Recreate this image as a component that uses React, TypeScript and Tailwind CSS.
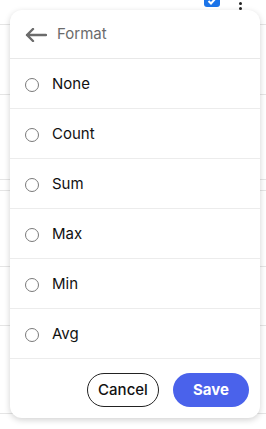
import React from "react";

const options = ["None", "Count", "Sum", "Max", "Min", "Avg"];

export default function App() {
  return (
    <div
      className="relative w-[266px] h-[429px] overflow-hidden bg-white"
      style={{ fontFamily: "Inter, 'Noto Sans', sans-serif" }}
    >
      {/* background page */}
      <div className="absolute inset-0">
        <div className="h-[25px] border-b border-[#e5e5e5]" />
        <div className="h-[70px] border-b border-[#e5e5e5]" />
        <div className="h-[85px] border-b border-[#e5e5e5]" />
        <div className="h-[11px] border-b border-[#e5e5e5]" />
        <div className="h-[76px] border-b border-[#e5e5e5]" />
        <div className="h-[59px] border-b border-[#e5e5e5]" />
        <div className="h-[88px] border-b border-[#e5e5e5]" />
        {/* checkbox + kebab */}
        <div className="absolute left-[204px] top-[-9px] w-[16px] h-[16px] rounded-[3px] bg-[#1a73e8] flex items-end justify-center pb-[2px]">
          <svg width="10" height="8" viewBox="0 0 10 8">
            <path d="M1.5 4l2.5 2.5L8.5 1.5" stroke="white" strokeWidth="2" fill="none" />
          </svg>
        </div>
        <div className="absolute left-[239px] top-[-3px] flex flex-col gap-[2px]">
          <div className="w-[3px] h-[3px] rounded-full bg-[#222]" />
          <div className="w-[3px] h-[3px] rounded-full bg-[#222]" />
          <div className="w-[3px] h-[3px] rounded-full bg-[#222]" />
        </div>
      </div>

      {/* popover */}
      <div className="absolute left-[10px] top-[10px] w-[250px] h-[408px] rounded-[12px] bg-white shadow-[0_2px_6px_rgba(0,0,0,0.18)] flex flex-col">
        <div className="h-[49px] flex items-center pl-[15px] pt-[1px] border-b border-[#e8e8e8]">
          <svg width="22" height="14" viewBox="0 0 22 14" className="mr-[10px]">
            <path d="M21 7H2M8 1L2 7l6 6" stroke="#6b6b6b" strokeWidth="2.4" fill="none" strokeLinecap="round" strokeLinejoin="round" />
          </svg>
          <span className="text-[15px] text-[#6b6b6b]">Format</span>
        </div>
        {options.map((o) => (
          <div key={o} className="h-[50px] flex items-center pl-[15px] pt-[2px] border-b border-[#ececec] shrink-0">
            <div className="w-[14px] h-[14px] rounded-full border-[1.5px] border-[#7a7a7a] mr-[13px]" />
            <span className="text-[15px] text-[#111]">{o}</span>
          </div>
        ))}
        <div className="flex-1 flex items-center justify-end gap-[14px] pr-[11px] pt-[3px]">
          <button className="h-[34px] w-[72px] rounded-full border border-[#222] text-[15px] font-medium text-[#111] bg-white">
            Cancel
          </button>
          <button className="h-[34px] w-[76px] rounded-full bg-[#4a62eb] text-[15px] font-bold text-white">
            Save
          </button>
        </div>
      </div>
    </div>
  );
}
